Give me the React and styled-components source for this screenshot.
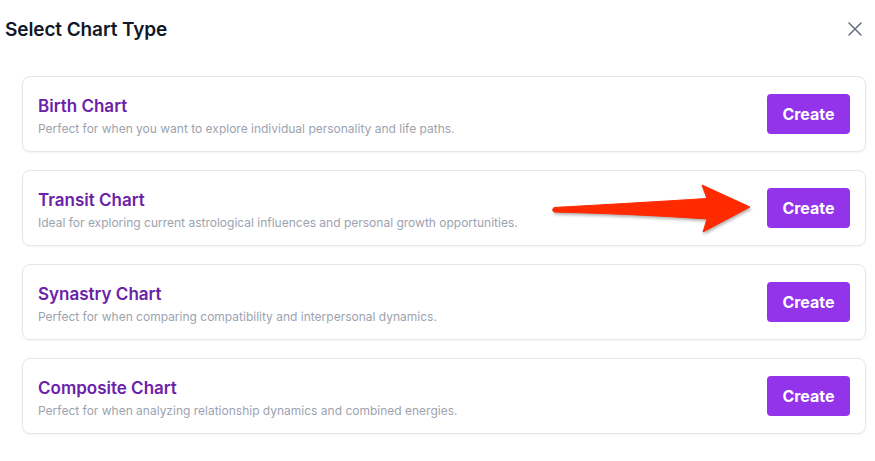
import React from 'react';
import styled, { createGlobalStyle } from 'styled-components';

const GlobalStyle = createGlobalStyle`
  body {
    margin: 0;
    background: #ffffff;
    font-family: Inter, "Noto Sans", "Liberation Sans", sans-serif;
    -webkit-font-smoothing: antialiased;
  }
`;

const Modal = styled.div`
  position: relative;
  width: 875px;
  height: 461px;
  background: #ffffff;
  box-sizing: border-box;
  padding: 17px 9px 0 5px;
`;

const Header = styled.div`
  display: flex;
  align-items: center;
  justify-content: space-between;
  height: 24px;
  margin-bottom: 35px;
`;

const Title = styled.h2`
  margin: 0;
  font-size: 19px;
  font-weight: 600;
  color: #111827;
  letter-spacing: -0.1px;
`;

const CloseButton = styled.button`
  display: flex;
  border: none;
  background: none;
  padding: 0;
  margin-right: 3px;
  color: #6b7280;
  cursor: pointer;
`;

const List = styled.div`
  display: flex;
  flex-direction: column;
  gap: 18px;
  margin-left: 17px;
`;

const Card = styled.div`
  display: flex;
  align-items: center;
  justify-content: space-between;
  height: 76px;
  box-sizing: border-box;
  padding: 0 15px 0 15px;
  border: 1px solid #e5e7eb;
  border-radius: 8px;
  box-shadow: 0 1px 2px rgba(0, 0, 0, 0.05);
`;

const Info = styled.div`
  display: flex;
  flex-direction: column;
  gap: 4px;
  margin-top: 3px;
`;

const CardTitle = styled.div`
  font-size: 17px;
  font-weight: 600;
  color: #6b21a8;
  line-height: 22px;
`;

const Description = styled.div`
  font-size: 12px;
  color: #9ca3af;
  line-height: 16px;
`;

const CreateButton = styled.button`
  width: 83px;
  height: 40px;
  border: none;
  border-radius: 4px;
  background: #9333ea;
  color: #ffffff;
  font-family: inherit;
  font-size: 16px;
  font-weight: 700;
  cursor: pointer;
`;

const Arrow = styled.svg`
  position: absolute;
  left: 545px;
  top: 180px;
  filter: drop-shadow(1px 2px 1.5px rgba(0, 0, 0, 0.3));
`;

const charts = [
  { name: 'Birth Chart', text: 'Perfect for when you want to explore individual personality and life paths.' },
  { name: 'Transit Chart', text: 'Ideal for exploring current astrological influences and personal growth opportunities.' },
  { name: 'Synastry Chart', text: 'Perfect for when comparing compatibility and interpersonal dynamics.' },
  { name: 'Composite Chart', text: 'Perfect for when analyzing relationship dynamics and combined energies.' },
];

const App = () => (
  <>
    <GlobalStyle />
    <Modal>
      <Header>
        <Title>Select Chart Type</Title>
        <CloseButton aria-label="Close">
          <svg width="16" height="16" viewBox="0 0 16 16" fill="none" stroke="currentColor" strokeWidth="1.6" strokeLinecap="round">
            <path d="M2 2l12 12M14 2L2 14" />
          </svg>
        </CloseButton>
      </Header>
      <List>
        {charts.map((c) => (
          <Card key={c.name}>
            <Info>
              <CardTitle>{c.name}</CardTitle>
              <Description>{c.text}</Description>
            </Info>
            <CreateButton>Create</CreateButton>
          </Card>
        ))}
      </List>
      <Arrow width="215" height="60" viewBox="0 0 215 60">
        <path
          d="M9 27.5 Q90 23 162 18.5 L157 5 L205 27 L158 52 L162 39 Q90 34 9 32 Q6 29.75 9 27.5 Z"
          fill="#ff2a00"
          stroke="#ff2a00"
          strokeWidth="1"
          strokeLinejoin="round"
        />
      </Arrow>
    </Modal>
  </>
);

export default App;
